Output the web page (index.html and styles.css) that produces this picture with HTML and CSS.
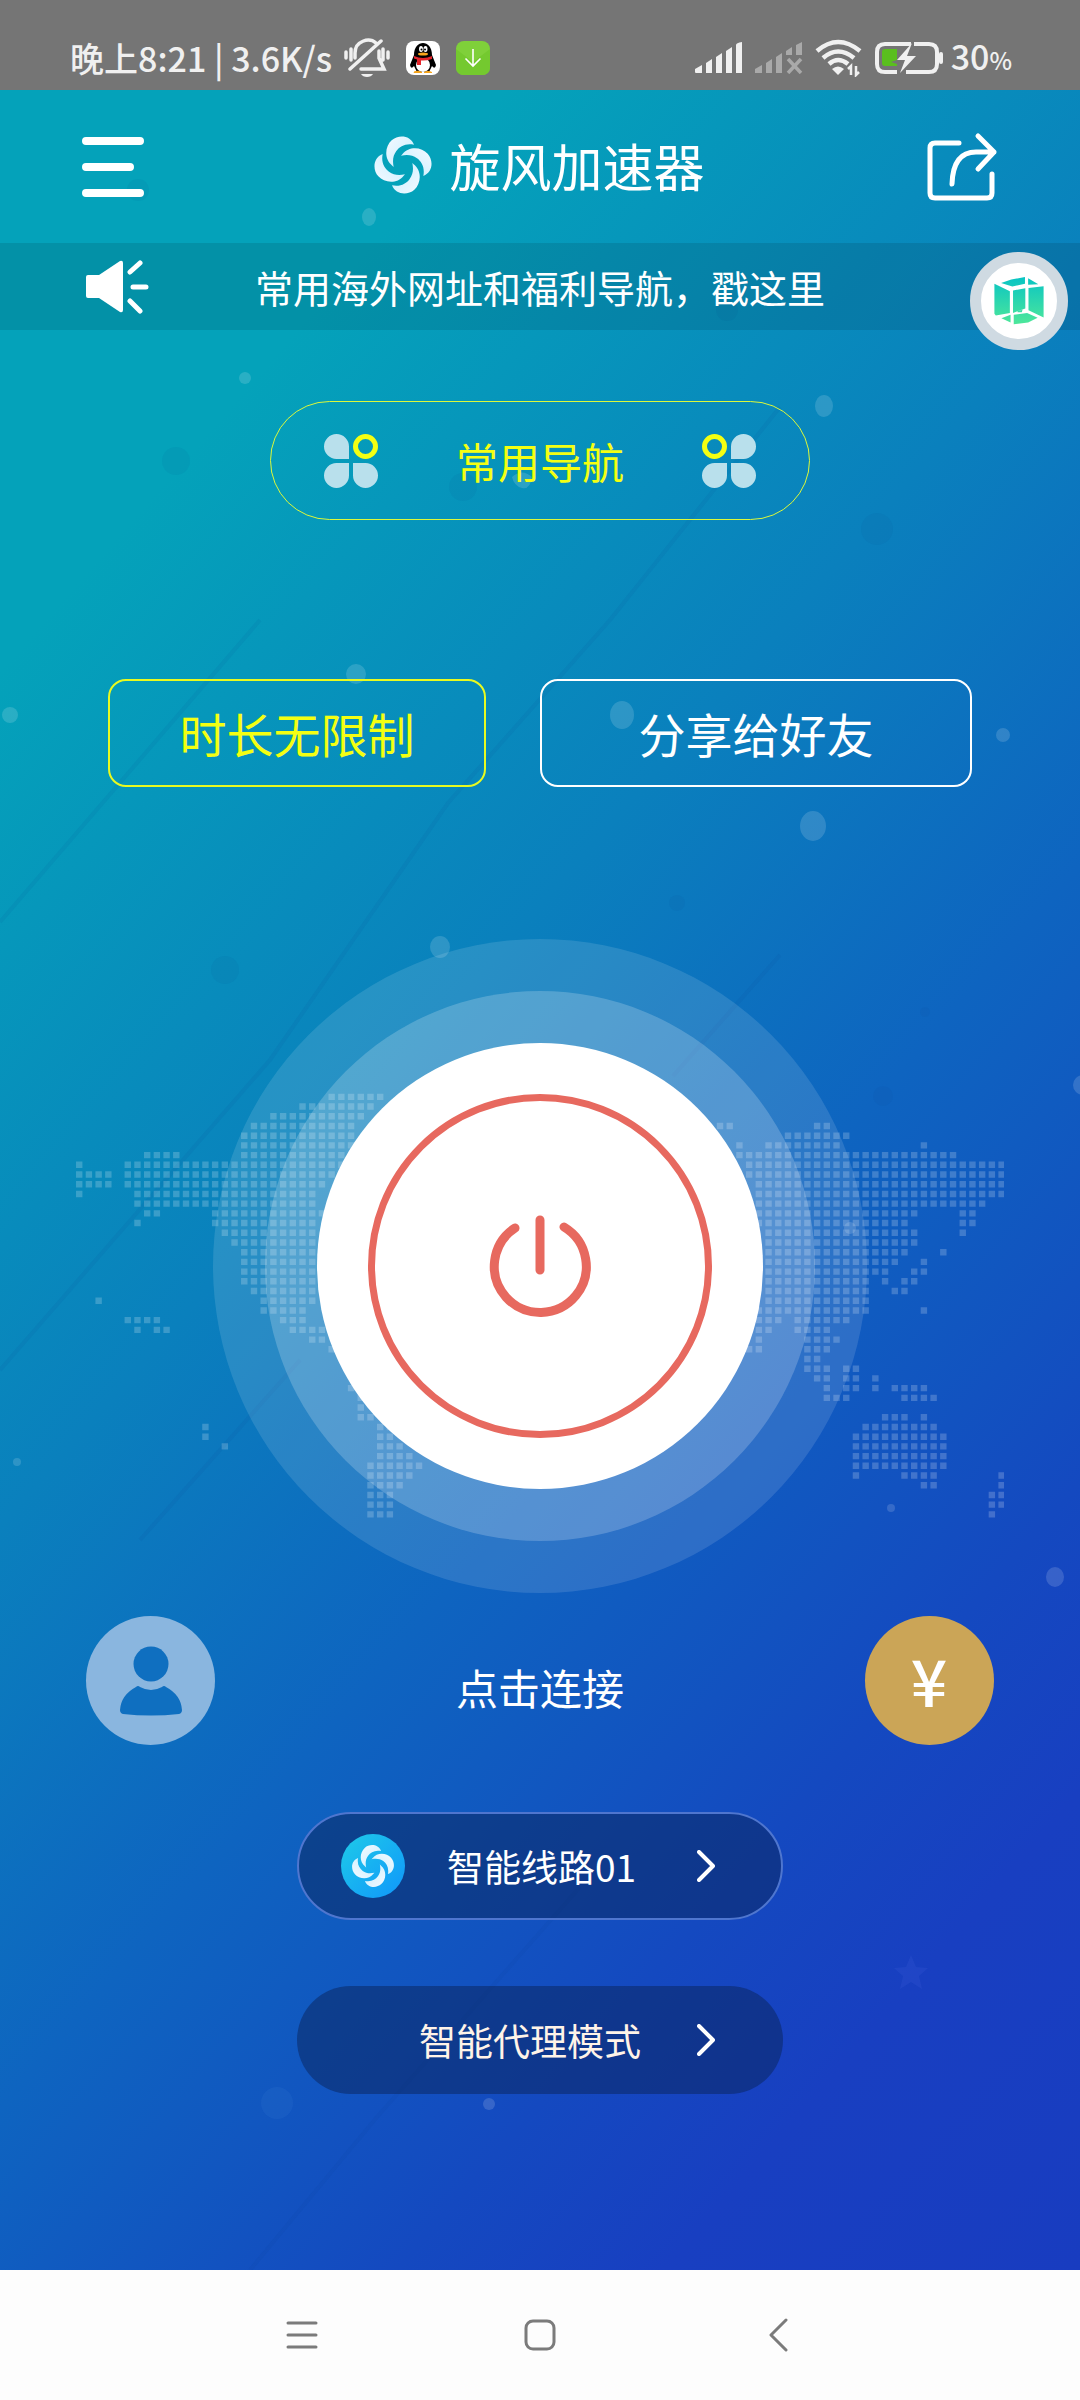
FILE: index.html
```html
<!DOCTYPE html>
<html lang="zh-CN">
<head>
<meta charset="utf-8">
<meta name="viewport" content="width=device-width, initial-scale=1">
<title>旋风加速器</title>
<link rel="stylesheet" href="styles.css">
</head>
<body>
<svg class="defs" aria-hidden="true">
  <defs>
    <linearGradient id="blade" x1="0" y1="0" x2="1" y2="1"><stop offset="0" stop-color="#f4f9ff"/><stop offset="1" stop-color="#c4eeff"/></linearGradient>
    <linearGradient id="cube" x1="0" y1="100" x2="0" y2="235" gradientUnits="userSpaceOnUse"><stop offset="0" stop-color="#08c4c4"/><stop offset="1" stop-color="#4ee79a"/></linearGradient>
    <path id="blade-shape" d="M-32 2C-58-18-54-56-34-74C-14-92 22-90 33-61C8-66-10-56-20-42C-30-28-32-14-28 6Z" fill="url(#blade)"/>
    <symbol id="pinwheel" viewBox="-90 -90 180 180">
      <use href="#blade-shape"/>
      <use href="#blade-shape" transform="rotate(90)"/>
      <use href="#blade-shape" transform="rotate(180)"/>
      <use href="#blade-shape" transform="rotate(270)"/>
    </symbol>
    <symbol id="chevron" viewBox="0 0 18 32"><path d="M2 2L16 16L2 30" fill="none" stroke="#fff" stroke-width="4" stroke-linecap="round" stroke-linejoin="round"/></symbol>
    <symbol id="clover" viewBox="0 0 54 54">
      <path fill="#b9e0ec" d="M25 25H12.500A12.500 12.500 0 1 1 25 12.500ZM25 29V41.500A12.500 12.500 0 1 1 12.500 29ZM29 29H41.500A12.500 12.500 0 1 1 29 41.500Z"/>
      <circle cx="41.500" cy="12.500" r="10" fill="none" stroke="#f4ff12" stroke-width="5"/>
    </symbol>
  </defs>
</svg>

<div class="status">
  <div class="status-side">
    <span class="status-text">晚上8:21 | 3.6K/s</span>
    <svg class="bell" width="46" height="40" viewBox="0 0 46 40" fill="none" stroke="#f0f0f0" stroke-width="3.500" stroke-linecap="round">
      <path d="M6 31L37 3M11 20V15C11 3 25-1 32 5M35 13V20L40 31H17M2 14V20M7 11V22M39 11V22M44 14V20"/>
      <path d="M17 36H29C27 40 19 40 17 36Z" fill="#f0f0f0" stroke="none"/>
    </svg>
    <svg class="app-icon" width="34" height="34" viewBox="0 0 34 34">
      <rect width="34" height="34" rx="8" fill="#fff"/>
      <path d="M8 14C8-2 26-2 26 14L30 24Q29 29 26 25L23 31H11L8 25Q5 29 4 24Z" fill="#000"/>
      <ellipse cx="17" cy="24" rx="7" ry="7" fill="#fff"/>
      <path d="M8 31Q12 29 16 31.500H8ZM18 31.500Q22 29 26 31.500Z" fill="#f7a51b" stroke="#f7a51b"/>
      <ellipse cx="15" cy="8" rx="2" ry="3" fill="#fff"/><ellipse cx="19.500" cy="8" rx="2" ry="3" fill="#fff"/>
      <circle cx="15.500" cy="8.500" r="1"/><circle cx="19" cy="8.500" r="1"/>
      <ellipse cx="17" cy="13" rx="5" ry="1.500" fill="#f7a51b"/>
      <path d="M8 15Q17 19 26 15V18Q20 20 15 19.500V24H11V18.500L8 17.500Z" fill="#e4252b"/>
    </svg>
    <svg class="app-icon" width="34" height="34" viewBox="0 0 34 34">
      <rect width="34" height="34" rx="8" fill="#7fd03a"/><path d="M0 8L17 21L34 8V26Q34 34 26 34H8Q0 34 0 26Z" fill="#74c92f"/>
      <path d="M17 8V25M9.500 17.500L17 25L24.500 17.500" fill="none" stroke="#fff" stroke-width="1.600"/>
    </svg>
  </div>
  <div class="status-side">
    <svg width="48" height="32" viewBox="0 0 48 32" fill="#f0f0f0"><path d="M0 27L7 23V31H1Q0 31 0 30ZM11 21L17 17V31H11ZM21 15L27 11V31H21ZM31 9L37 5V31H31ZM41 3Q41 1 47 0V31H41Z"/></svg>
    <svg class="sim" width="48" height="32" viewBox="0 0 48 32" fill="#a9a9a9"><path d="M0 27L7 23V31H0ZM11 21L17 17V31H11ZM21 15L27 11V31H21ZM31 9L37 5V13H31ZM41 3L47 0V13H41Z"/><path d="M33 17L46 31M46 17L33 31" stroke="#a9a9a9" stroke-width="3.500"/></svg>
    <svg class="wifi" width="48" height="38" viewBox="0 0 48 38" fill="none" stroke="#f0f0f0" stroke-width="4.500"><path d="M2 12Q23-6 45 12M8 19Q23 6 39 19M14 25Q23 17 33 25"/><path d="M17 30Q23 25 29 30L23 36Z" fill="#f0f0f0" stroke="none"/><path d="M36 36V27L33 30M41 27V36L44 33" stroke-width="2.500"/></svg>
    <svg class="battery" width="68" height="32" viewBox="0 0 68 32"><path d="M36 2H10Q2 2 2 10V22Q2 30 10 30H22M39 2H54Q62 2 62 10V22Q62 30 54 30H31" fill="none" stroke="#f0f0f0" stroke-width="4"/><path d="M7 10Q7 7 10 7H22V18L16 20L22 22V24H10Q7 24 7 21Z" fill="#5abf1e"/><path d="M37 1L22 18H30L25 31L41 14H32Z" fill="#f0f0f0"/><path d="M66 12V20" stroke="#f0f0f0" stroke-width="4" stroke-linecap="round"/></svg>
    <span class="status-text">30<small>%</small></span>
  </div>
</div>

<div class="app">
  <svg class="decor" viewBox="0 90 1080 2180" preserveAspectRatio="none" aria-hidden="true">
    <g stroke="#0a3f90" stroke-opacity=".08" stroke-width="4">
      <path d="M0 922L260 620M0 1370L270 1060L448 803L610 620L780 407M140 1540L300 1360M673 1076L780 955M250 2270L377 2117L580 1887" fill="none"/>
    </g>
    <g fill="#fff" fill-opacity=".15">
      <ellipse cx="369" cy="217" rx="7" ry="9"/><circle cx="245" cy="378" r="6"/><ellipse cx="824" cy="406" rx="9" ry="11"/>
      <circle cx="356" cy="674" r="10"/><circle cx="10" cy="715" r="8"/><ellipse cx="622" cy="715" rx="12" ry="14"/>
      <circle cx="1003" cy="735" r="7"/><ellipse cx="813" cy="826" rx="13" ry="15"/><ellipse cx="440" cy="947" rx="10" ry="11"/>
      <circle cx="1083" cy="1085" r="10"/><ellipse cx="1055" cy="1577" rx="9" ry="10"/><circle cx="489" cy="2104" r="6"/>
      <circle cx="17" cy="1462" r="4"/><circle cx="891" cy="1508" r="4"/><circle cx="850" cy="1228" r="6"/>
      <path d="M512 477Q522 468 532 477Q530 490 522 488Q514 486 512 477Z"/>
    </g>
    <g fill="#0a4a90" fill-opacity=".07">
      <circle cx="138" cy="190" r="11"/><circle cx="176" cy="461" r="14"/><circle cx="877" cy="529" r="16"/><circle cx="225" cy="970" r="14"/>
      <circle cx="883" cy="1096" r="10"/><circle cx="677" cy="903" r="8"/><circle cx="463" cy="487" r="14"/><circle cx="925" cy="1012" r="5"/><circle cx="727" cy="310" r="11"/>
    </g>
    <circle cx="277" cy="2103" r="16" fill="#4a8be0" fill-opacity=".12"/>
    <path d="M911 1955L916 1967L928 1968L919 1976L922 1989L911 1982L900 1989L903 1976L894 1968L906 1967Z" fill="#4a6be0" fill-opacity=".16"/>
  </svg>

  <header class="header">
    <button class="icon-button" aria-label="菜单"><svg width="62" height="66" viewBox="0 0 62 66" stroke="#fff" stroke-width="8" stroke-linecap="round"><path d="M4 7H58M4 33H48M4 59H58"/></svg></button>
    <h1 class="title"><svg width="60" height="60"><use href="#pinwheel"/></svg>旋风加速器</h1>
    <button class="icon-button" aria-label="分享"><svg width="72" height="72" viewBox="0 0 72 72" fill="none" stroke="#fff" stroke-width="5" stroke-linecap="round" stroke-linejoin="round"><path d="M33 12H9Q4 12 4 17V62Q4 67 9 67H61Q66 67 66 62V43M26 53Q27 21 50 21H68M52 5L68 21L52 38"/></svg></button>
  </header>

  <a class="notice" href="#">
    <svg width="66" height="54" viewBox="0 0 66 54"><path d="M2 17Q2 15 4 15H15L36 1Q39 0 39 3V50Q39 53 36 52L15 38H4Q2 38 2 36Z" fill="#fff"/><path d="M46 12L56 3M49 27H62M46 41L56 51" stroke="#fff" stroke-width="5" stroke-linecap="round"/></svg>
    <span>常用海外网址和福利导航，戳这里</span>
  </a>

  <button class="floating" aria-label="悬浮窗">
    <svg width="52" height="50" viewBox="108 98 148 142" fill="url(#cube)"><path d="M131 118L160 108L199 101V120L163 128ZM208 104L237 121L208 123ZM112 120L156 141V203L116 210L112 205ZM165 139L200 133V190L165 203ZM209 132L252 127V216L209 195ZM132 218L158 208V230ZM167 208L205 203L235 217L208 230L167 235ZM178 198L192 194L190 201L178 201Z"/></svg>
  </button>

  <main class="main">
    <button class="nav-pill">
      <svg width="54" height="54"><use href="#clover"/></svg>
      <span>常用导航</span>
      <svg class="mirrored" width="54" height="54"><use href="#clover"/></svg>
    </button>

    <div class="pair">
      <button class="outline outline-yellow">时长无限制</button>
      <button class="outline">分享给好友</button>
    </div>

    <div class="stage">
      <svg class="map" viewBox="0 -0.5 95.66 44" aria-hidden="true">
        <path fill="none" stroke="#fff" stroke-opacity=".2" stroke-width=".66" stroke-dasharray=".66 .34" d="M26 0h6M23 1h8M20 2h10M18 3h11M17 4h12M17 5h12M7 6h4M17 6h11M0 7h1M5 7h23M0 8h4M5 8h22M0 9h4M5 9h21M0 10h1M6 10h19M6 11h19M7 12h2M14 12h12M6 13h1M14 13h11M15 14h10M16 15h9M17 16h8M17 17h8M17 18h8M17 19h8M18 20h7M2 21h1M19 21h6M19 22h5M5 23h4M21 23h3M6 24h1M8 24h2M22 24h4M24 25h2M26 26h1M28 30h1M29 31h1M29 32h1M29 33h2M13 34h1M31 34h2M13 35h1M31 35h2M15 36h1M31 36h3M31 37h4M30 38h6M30 39h5M30 40h4M30 41h3M30 42h3M30 43h3"/>
        <path fill="none" stroke="#fff" stroke-opacity=".2" stroke-width=".66" stroke-dasharray=".66 .34" d="M66 3h2M76 3h2M73 4h7M68 5h1M71 5h8M87 5h1M68 6h23M69 7h27M69 8h27M70 9h26M70 10h26M70 11h24M70 12h17M91 12h2M70 13h16M91 13h2M71 14h16M91 14h1M71 15h16M71 16h15M89 16h1M71 17h14M87 17h1M71 18h13M86 18h2M71 19h11M83 19h1M85 19h2M71 20h11M84 20h2M71 21h11M70 22h12M87 22h1M70 23h3M74 23h6M70 24h2M74 24h4M70 25h1M75 25h4M69 26h2M75 26h3M75 27h2M75 28h3M79 28h2M76 29h2M79 29h2M82 29h1M77 30h1M79 30h2M82 30h1M84 30h4M77 31h3M85 31h4M83 33h3M87 33h1M81 34h8M80 35h10M80 36h10M80 37h10M80 38h10M80 39h1M85 39h4M95 39h1M87 40h2M95 40h1M94 41h2M94 42h2M94 43h1"/>
      </svg>
      <div class="halo-outer">
        <div class="halo-inner">
          <button class="power" aria-label="点击连接">
            <span class="power-ring">
              <svg width="102" height="102" viewBox="-51 -51 102 102" fill="none" stroke="#e7695f" stroke-width="9" stroke-linecap="round"><path d="M-25-38A46 46 0 1 0 24-39M0-46V4"/></svg>
            </span>
          </button>
        </div>
      </div>
    </div>

    <div class="actions">
      <button class="round round-user" aria-label="个人中心"><svg width="62" height="70" viewBox="0 0 62 70" fill="#0f6fc0"><circle cx="31" cy="18" r="17.500"/><path d="M16 41Q18 39 20 41Q31 47 42 41Q44 39 46 41Q61 49 62 64Q62 67 59 68Q31 71 3 68Q0 67 0 64Q1 49 16 41Z"/></svg></button>
      <p class="hint">点击连接</p>
      <button class="round round-pay" aria-label="充值">¥</button>
    </div>

    <button class="select select-line">
      <span class="line-badge"><svg width="44" height="44"><use href="#pinwheel"/></svg></span>
      <span>智能线路01</span>
      <svg class="arrow" width="18" height="32"><use href="#chevron"/></svg>
    </button>
    <button class="select select-mode">
      <span>智能代理模式</span>
      <svg class="arrow" width="18" height="32"><use href="#chevron"/></svg>
    </button>
  </main>
</div>

<nav class="system-nav">
  <button aria-label="最近任务"><svg width="34" height="34" viewBox="0 0 34 34" stroke="#7b7b7b" stroke-width="3" stroke-linecap="round"><path d="M3 5H31M3 17H31M3 29H31"/></svg></button>
  <button aria-label="主页"><svg width="34" height="34" viewBox="0 0 34 34"><rect x="3" y="3" width="28" height="28" rx="7" fill="none" stroke="#7b7b7b" stroke-width="3"/></svg></button>
  <button aria-label="返回"><svg width="34" height="34" viewBox="0 0 34 34" fill="none" stroke="#7b7b7b" stroke-width="3" stroke-linecap="round" stroke-linejoin="round"><path d="M25 2L10 17L25 32"/></svg></button>
</nav>
</body>
</html>
```
FILE: styles.css
```css
* {
  box-sizing: border-box;
}

body {
  margin: 0;
  min-height: 100vh;
  display: flex;
  flex-direction: column;
  font-family: "Noto Sans CJK SC", "Noto Sans", sans-serif;
  color: #fff;
  background: #fdfdfd;
}

button {
  margin: 0;
  padding: 0;
  border: 0;
  background: none;
  color: inherit;
  font: inherit;
}

svg {
  display: block;
  flex: none;
}

.defs {
  position: absolute;
  width: 0;
  height: 0;
}

/* System status bar */
.status {
  display: flex;
  align-items: flex-start;
  justify-content: space-between;
  height: 90px;
  padding: 28px 68px 0 70px;
  background: #757575;
}

.status-side {
  display: flex;
  align-items: center;
  height: 62px;
  padding-bottom: 2px;
}

.status-text {
  font-size: 34px;
  line-height: 40px;
  font-weight: 500;
  color: #f0f0f0;
}

.status-text small {
  font-size: 24px;
}

.bell {
  margin-left: 12px;
}

.app-icon {
  margin-left: 16px;
}

.sim,
.wifi,
.battery {
  margin-left: 12px;
}

.battery {
  margin-right: 8px;
}

/* App */
.app {
  position: relative;
  flex: 1;
  background: linear-gradient(131deg, #04a2ba 0%, #04a2ba 17%, #0a80bd 42%, #0e64c0 59%, #1449c0 77%, #183fc1 86%, #183cc0 100%);
}

.decor {
  position: absolute;
  inset: 0;
  width: 100%;
  height: 100%;
}

.header,
.notice,
.main {
  position: relative;
}

.header {
  display: flex;
  align-items: center;
  justify-content: space-between;
  height: 153px;
  padding: 0 82px;
}

.title {
  display: flex;
  align-items: center;
  gap: 16px;
  margin: 0;
  padding: 0 0 4px 8px;
  font-size: 51px;
  line-height: 60px;
  font-weight: 400;
}

.notice {
  display: grid;
  grid-template-columns: 66px 1fr 66px;
  align-items: center;
  height: 87px;
  padding: 0 84px;
  background: rgba(0, 0, 0, .1);
  color: #fff;
  font-size: 38px;
  line-height: 48px;
  text-align: center;
  text-decoration: none;
}

.floating {
  position: absolute;
  top: 162px;
  right: 12px;
  z-index: 1;
  display: grid;
  place-items: center;
  width: 98px;
  height: 98px;
  border: 11px solid #cfdae2;
  border-radius: 50%;
  background: #fff;
}

.main {
  display: flex;
  flex-direction: column;
  align-items: center;
  padding: 71px 0 176px;
}

.nav-pill {
  display: flex;
  align-items: center;
  justify-content: space-between;
  width: 50%;
  height: 119px;
  padding: 0 53px;
  border: 1px solid #dcf83a;
  border-radius: 60px;
  color: #f4ff12;
  font-size: 42px;
  line-height: 54px;
}

.mirrored {
  transform: scaleX(-1);
}

.pair {
  display: grid;
  grid-template-columns: 7fr 8fr;
  gap: 54px;
  width: 80%;
  margin-top: 159px;
}

.outline {
  height: 108px;
  border: 2px solid #fff;
  border-radius: 18px;
  font-size: 47px;
  line-height: 60px;
}

.outline-yellow {
  border-color: #e8fa20;
  color: #f4ff12;
}

/* Connect control on the dotted world map */
.stage {
  display: grid;
  place-items: center;
  width: 100%;
  margin-top: 152px;
}

.map,
.halo-outer {
  grid-area: 1 / 1;
}

.map {
  width: 86%;
  margin-top: 80px;
}

.halo-outer,
.halo-inner {
  padding: 52px;
  border-radius: 50%;
}

.halo-outer {
  position: relative;
  background: rgba(255, 255, 255, .12);
}

.halo-inner {
  background: rgba(255, 255, 255, .2);
}

.power {
  display: block;
  padding: 51px;
  border-radius: 50%;
  background: #fff;
}

.power-ring {
  display: grid;
  place-items: center;
  width: 344px;
  height: 344px;
  border: 7px solid #e7695f;
  border-radius: 50%;
}

.actions {
  display: flex;
  align-items: center;
  justify-content: space-between;
  width: 84%;
  margin-top: 23px;
}

.round {
  display: grid;
  place-items: center;
  width: 129px;
  height: 129px;
  border-radius: 50%;
}

.round-user {
  background: #8ab6df;
}

.round-pay {
  padding-bottom: 4px;
  background: #cba557;
  font-size: 64px;
  line-height: 64px;
  font-weight: 500;
}

.hint {
  margin: 0;
  padding-top: 12px;
  font-size: 42px;
  line-height: 54px;
}

.select {
  display: flex;
  align-items: center;
  width: 45%;
  height: 108px;
  padding: 0 66px 0 42px;
  border-radius: 54px;
  background: rgba(10, 36, 90, .5);
  font-size: 37px;
  line-height: 48px;
}

.arrow {
  margin-left: auto;
}

.select-line {
  gap: 42px;
  margin-top: 67px;
  border: 2px solid #4f76cf;
}

.select-mode {
  margin-top: 66px;
  padding: 0 68px 0 122px;
  color: #fff3e8;
}

.line-badge {
  display: grid;
  place-items: center;
  width: 64px;
  height: 64px;
  border-radius: 50%;
  background: linear-gradient(135deg, #1ecbe8, #1096fb);
}

/* System navigation */
.system-nav {
  display: grid;
  grid-template-columns: repeat(3, 1fr);
  height: 130px;
  padding: 0 17%;
  background: #fdfdfd;
}

.system-nav button {
  display: grid;
  place-items: center;
}
```
